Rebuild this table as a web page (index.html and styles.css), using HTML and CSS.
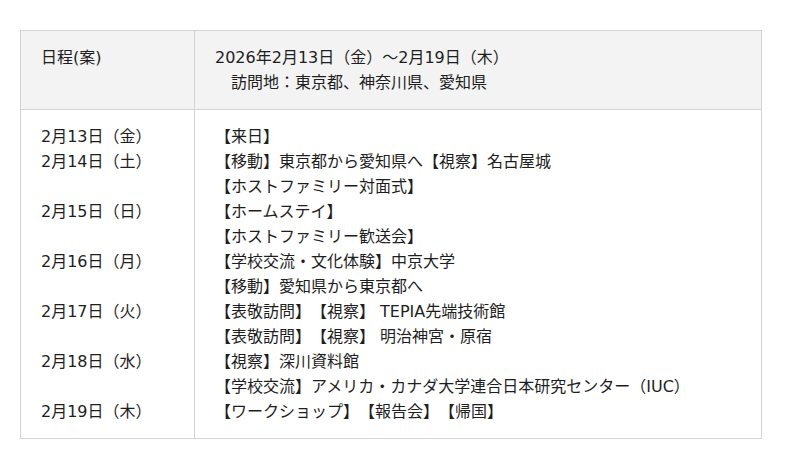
FILE: index.html
```html
<!DOCTYPE html>
<html lang="ja">
<head>
<meta charset="utf-8">
<link rel="stylesheet" href="styles.css">
</head>
<body>
<table class="schedule">
  <tr class="head">
    <th class="label">日程(案)</th>
    <td class="info">2026年2月13日（金）〜2月19日（木）<br>　訪問地：東京都、神奈川県、愛知県</td>
  </tr>
  <tr class="body">
    <td class="dates">2月13日（金）<br>2月14日（土）<br><br>2月15日（日）<br><br>2月16日（月）<br><br>2月17日（火）<br><br>2月18日（水）<br><br>2月19日（木）</td>
    <td class="items">【来日】<br>【移動】東京都から愛知県へ【視察】名古屋城<br>【ホストファミリー対面式】<br>【ホームステイ】<br>【ホストファミリー歓送会】<br>【学校交流・文化体験】中京大学<br>【移動】愛知県から東京都へ<br>【表敬訪問】【視察】 TEPIA先端技術館<br>【表敬訪問】【視察】 明治神宮・原宿<br>【視察】深川資料館<br>【学校交流】アメリカ・カナダ大学連合日本研究センター（IUC）<br>【ワークショップ】【報告会】【帰国】</td>
  </tr>
</table>
</body>
</html>
```
FILE: styles.css
```css
html, body {
  margin: 0;
  padding: 0;
  background: #fff;
}
body {
  font-family: "DejaVu Sans", "Noto Sans CJK JP", sans-serif;
  font-size: 16px;
  line-height: 25px;
  color: #1e1e1e;
  padding: 30px 0 0 20px;
  text-spacing-trim: space-all;
  font-feature-settings: normal;
}
.schedule {
  border-collapse: collapse;
  width: 742px;
}
.schedule th, .schedule td {
  border: 1px solid #d4d4d4;
  text-align: left;
  vertical-align: top;
  font-weight: normal;
  padding: 0 20px;
}
.head th, .head td {
  background: #f3f3f3;
  padding-top: 14px;
  padding-bottom: 14px;
}
.label {
  width: 133px;
}
.body td {
  padding-top: 14px;
  padding-bottom: 14px;
}
```
